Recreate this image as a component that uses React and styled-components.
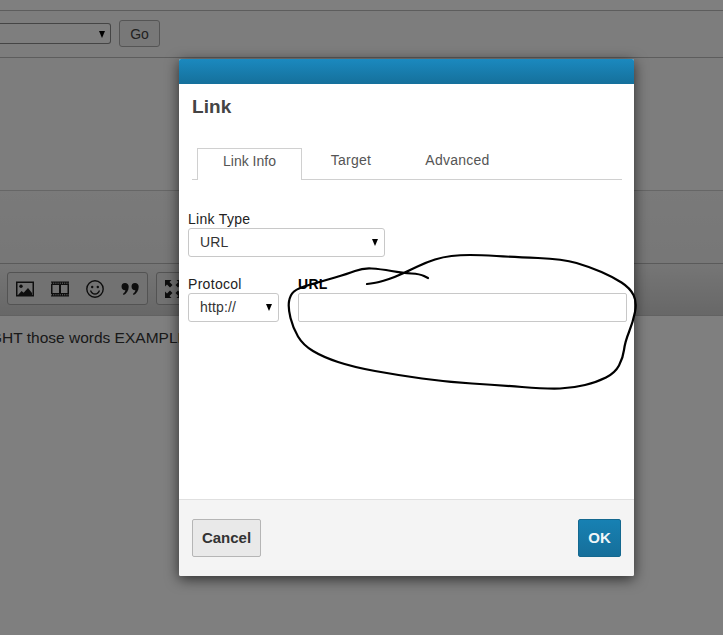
import React from "react";
import styled, { createGlobalStyle } from "styled-components";

const Global = createGlobalStyle`
  html, body { margin: 0; padding: 0; height: 635px; overflow: hidden; background: #fff; }
  body { font-family: "Liberation Sans", Arial, sans-serif; color: #333; }
  * { box-sizing: border-box; }
`;

const Page = styled.div`
  position: relative;
  width: 723px;
  height: 635px;
  overflow: hidden;
  background: #fefefe;
  display: flex;
  flex-direction: column;
`;
const TopStrip = styled.div`
  height: 11px;
  flex: none;
  border-bottom: 1px solid #bbb;
`;
const FilterBar = styled.div`
  height: 47px;
  flex: none;
  display: flex;
  align-items: center;
  gap: 8px;
  padding: 0 0 1px 0;
  border-bottom: 1px solid #bbb;
  background: #fafafa;
`;
const BulkSelect = styled.div`
  width: 111px;
  height: 21px;
  border: 1px solid #8a8a8a;
  border-left: 0;
  border-radius: 0 3px 3px 0;
  display: flex;
  justify-content: flex-end;
  align-items: center;
  padding-right: 5px;
  background: #fdfdfd;
`;
const GoButton = styled.div`
  width: 41px;
  height: 27px;
  border: 1px solid #aaa;
  border-radius: 3px;
  background: #f0f0f0;
  color: #444;
  font-size: 14px;
  display: flex;
  align-items: center;
  justify-content: center;
`;
const BlankArea = styled.div`
  height: 133px;
  flex: none;
  border-bottom: 1px solid #ccc;
  background: #fbfbfb;
`;
const UpperEditor = styled.div`
  height: 73px;
  flex: none;
  border-bottom: 1px solid #b5b5b5;
  background: linear-gradient(#f4f4f4, #eeeeee);
`;
const EditorToolbar = styled.div`
  height: 52px;
  flex: none;
  display: flex;
  align-items: flex-start;
  gap: 8px;
  padding: 8px 0 0 7px;
  border-bottom: 1px solid #c4c4c4;
  background: linear-gradient(#ececec, #cfcfcf);
`;
const ToolGroup = styled.div`
  height: 33px;
  flex: none;
  display: flex;
  align-items: center;
  gap: 17px;
  padding: 0 8px;
  border: 1px solid #a6a6a6;
  border-radius: 3px;
  background: #e4e4e4;
  color: #1c1c1c;
`;
const ToolIcon = styled.svg`
  width: 18px;
  height: 18px;
  flex: none;
  display: block;
`;
const EditorText = styled.div`
  padding: 13px 0 0 0;
  margin-left: -10px;
  font-size: 15.5px;
  line-height: 18px;
  color: #333;
  white-space: nowrap;
`;
const Scrim = styled.div`
  position: absolute;
  inset: 0;
  background: rgba(0, 0, 0, 0.5);
`;
const Dialog = styled.div`
  position: absolute;
  left: 179px;
  top: 59px;
  width: 455px;
  height: 517px;
  display: flex;
  flex-direction: column;
  background: #fff;
  border-radius: 2px;
  box-shadow: 0 3px 14px rgba(0, 0, 0, 0.65);
  overflow: hidden;
`;
const DialogBar = styled.div`
  height: 25px;
  flex: none;
  background: linear-gradient(#1b89bf, #15709b);
`;
const DialogBody = styled.div`
  flex: 1;
  display: flex;
  flex-direction: column;
  padding: 12px 12px 0 9px;
`;
const Title = styled.h1`
  margin: 0 0 0 4px;
  font-size: 19px;
  line-height: 22px;
  font-weight: 700;
  letter-spacing: 0.1px;
  color: #444;
`;
const Tabs = styled.div`
  display: flex;
  height: 32px;
  margin: 30px 0 0 4px;
  padding-left: 5px;
  border-bottom: 1px solid #d0d0d0;
`;
const Tab = styled.div`
  height: ${(p) => (p.$active ? "32px" : "31px")};
  width: ${(p) => p.$w}px;
  flex: none;
  padding-top: 4px;
  text-align: center;
  font-size: 14px;
  line-height: 17px;
  letter-spacing: ${(p) => (p.$active ? "0" : "0.25px")};
  color: #555;
  background: #fff;
  border: ${(p) => (p.$active ? "1px solid #d0d0d0" : "0")};
  border-bottom: 0;
`;
const FieldRow = styled.div`
  display: flex;
  gap: 19px;
  margin-top: ${(p) => p.$mt}px;
`;
const Field = styled.div`
  display: flex;
  flex: none;
  flex-direction: column;
  width: ${(p) => p.$w}px;
`;
const Label = styled.label`
  font-size: 14px;
  line-height: 16px;
  height: 16px;
  color: ${(p) => (p.$strong ? "#000" : "#222")};
  font-weight: ${(p) => (p.$strong ? 700 : 400)};
  letter-spacing: 0.3px;
`;
const SelectBox = styled.div`
  height: 29px;
  margin-top: 1px;
  display: flex;
  align-items: center;
  justify-content: space-between;
  padding: 0 6px 2px 11px;
  border: 1px solid #c8c8c8;
  border-radius: 3px;
  background: #fff;
  font-size: 14px;
  letter-spacing: 0.15px;
  color: #333;
`;
const Caret = styled.span`
  flex: none;
  width: 0;
  height: 0;
  margin-top: 2px;
  border-left: 3px solid transparent;
  border-right: 3px solid transparent;
  border-top: 7px solid #000;
`;
const TextInput = styled.input`
  height: 29px;
  margin-top: 1px;
  width: 100%;
  border: 1px solid #c8c8c8;
  border-radius: 2px;
  background: #fff;
  outline: none;
`;
const Footer = styled.div`
  height: 77px;
  flex: none;
  display: flex;
  align-items: flex-start;
  justify-content: space-between;
  padding: 19px 13px 0;
  background: #f4f4f4;
  border-top: 1px solid #e0e0e0;
`;
const Button = styled.div`
  height: 38px;
  padding-bottom: 2px;
  display: flex;
  align-items: center;
  justify-content: center;
  width: ${(p) => p.$w}px;
  font-size: 15px;
  font-weight: 700;
  border-radius: 2px;
  border: 1px solid ${(p) => (p.$primary ? "#14688f" : "#b5b5b5")};
  color: ${(p) => (p.$primary ? "#f2f6f8" : "#333")};
  background: ${(p) => (p.$primary ? "linear-gradient(#1781b3,#166f9a)" : "#e9e9e9")};
`;
const Ink = styled.svg`
  position: absolute;
  left: 0;
  top: 0;
  width: 723px;
  height: 635px;
  pointer-events: none;
`;

const inkPoints = [
  [367, 284], [375, 283], [383, 281], [395, 277], [408, 271], [427, 262], [443, 257], [460, 255],
  [480, 255], [513, 257], [563, 259], [590, 267], [613, 277], [630, 288], [637, 302], [633, 322],
  [625, 342], [623, 358], [615, 373], [597, 382], [573, 388], [547, 389], [497, 385], [447, 382],
  [397, 375], [353, 367], [323, 357], [303, 345], [293, 328], [288, 308], [290, 295], [298, 288],
  [323, 281], [347, 274], [363, 268], [380, 269], [403, 273], [420, 274], [428, 278],
];
const inkPath = () => {
  let d = `M${inkPoints[0][0]} ${inkPoints[0][1]}`;
  for (let i = 1; i < inkPoints.length - 1; i++) {
    const [x, y] = inkPoints[i];
    const [nx, ny] = inkPoints[i + 1];
    d += ` Q${x} ${y} ${(x + nx) / 2} ${(y + ny) / 2}`;
  }
  const last = inkPoints[inkPoints.length - 1];
  return d + ` L${last[0]} ${last[1]}`;
};

const ImageIcon = () => (
  <ToolIcon viewBox="0 0 18 18">
    <path fill="currentColor" fillRule="evenodd" d="M0 1.500h18v15H0zM1.500 3v12h15V3z" />
    <circle cx="5" cy="6.200" r="1.700" fill="currentColor" />
    <path fill="currentColor" d="M2 15l3.600-4 2 1.800L12 8l4 5v2z" />
  </ToolIcon>
);
const FilmIcon = () => (
  <ToolIcon viewBox="0 0 18 18">
    <path fill="currentColor" fillRule="evenodd" d="M0 1.500h18v15H0zM1.500 5v8h6.500V5zM10 5v8h6.500V5z" />
    <path stroke="#e4e4e4" strokeWidth="1" strokeDasharray="1 1.200" d="M0 3.200h18M0 14.800h18" />
  </ToolIcon>
);
const SmileIcon = () => (
  <ToolIcon viewBox="0 0 18 18">
    <circle cx="9" cy="9" r="8.200" fill="none" stroke="currentColor" strokeWidth="1.400" />
    <circle cx="6.200" cy="7" r="1.200" fill="currentColor" />
    <circle cx="11.800" cy="7" r="1.200" fill="currentColor" />
    <path d="M4.500 10.500c1 2.500 2.700 3.500 4.500 3.500s3.500-1 4.500-3.500" fill="none" stroke="currentColor" strokeWidth="1.300" />
  </ToolIcon>
);
const QuoteIcon = () => (
  <ToolIcon viewBox="0 0 18 18">
    <path fill="currentColor" d="M4 3a3.600 3.600 0 0 1 3.700 3.700c0 3.800-2.200 6.800-5 8.300l-.8-1.100c1.400-1 2.300-2.200 2.500-3.600A3.600 3.600 0 0 1 4 3z" />
    <path fill="currentColor" d="M14 3a3.600 3.600 0 0 1 3.700 3.700c0 3.800-2.200 6.800-5 8.300l-.8-1.100c1.400-1 2.300-2.200 2.500-3.600A3.600 3.600 0 0 1 14 3z" />
  </ToolIcon>
);
const ExpandIcon = () => (
  <ToolIcon viewBox="0 0 18 18">
    <path fill="currentColor" d="M0 0h6.500L4.500 2l3 3-2.500 2.500-3-3-2 2zM18 18h-6.500l2-2-3-3 2.500-2.500 3 3 2-2zM0 18v-6.500l2 2 3-3L7.500 13l-3 3 2 2zM18 0v6.500l-2-2-3 3L10.500 5l3-3-2-2z" />
  </ToolIcon>
);

export default function App() {
  return (
    <Page>
      <Global />
      <TopStrip />
      <FilterBar>
        <BulkSelect><Caret /></BulkSelect>
        <GoButton>Go</GoButton>
      </FilterBar>
      <BlankArea />
      <UpperEditor />
      <EditorToolbar>
        <ToolGroup>
          <ImageIcon />
          <FilmIcon />
          <SmileIcon />
          <QuoteIcon />
        </ToolGroup>
        <ToolGroup>
          <ExpandIcon />
        </ToolGroup>
      </EditorToolbar>
      <EditorText>GHT those words EXAMPLE</EditorText>
      <Scrim />
      <Dialog>
        <DialogBar />
        <DialogBody>
          <Title>Link</Title>
          <Tabs>
            <Tab $active $w={105}>Link Info</Tab>
            <Tab $w={98}>Target</Tab>
            <Tab $w={115}>Advanced</Tab>
          </Tabs>
          <FieldRow $mt={31}>
            <Field $w={197}>
              <Label>Link Type</Label>
              <SelectBox>URL<Caret /></SelectBox>
            </Field>
          </FieldRow>
          <FieldRow $mt={19}>
            <Field $w={91}>
              <Label>Protocol</Label>
              <SelectBox>http://<Caret /></SelectBox>
            </Field>
            <Field $w={329}>
              <Label $strong>URL</Label>
              <TextInput />
            </Field>
          </FieldRow>
        </DialogBody>
        <Footer>
          <Button $w={69}>Cancel</Button>
          <Button $primary $w={43}>OK</Button>
        </Footer>
      </Dialog>
      <Ink viewBox="0 0 723 635">
        <path d={inkPath()} fill="none" stroke="#000" strokeWidth="2.200" strokeLinecap="round" strokeLinejoin="round" />
      </Ink>
    </Page>
  );
}
